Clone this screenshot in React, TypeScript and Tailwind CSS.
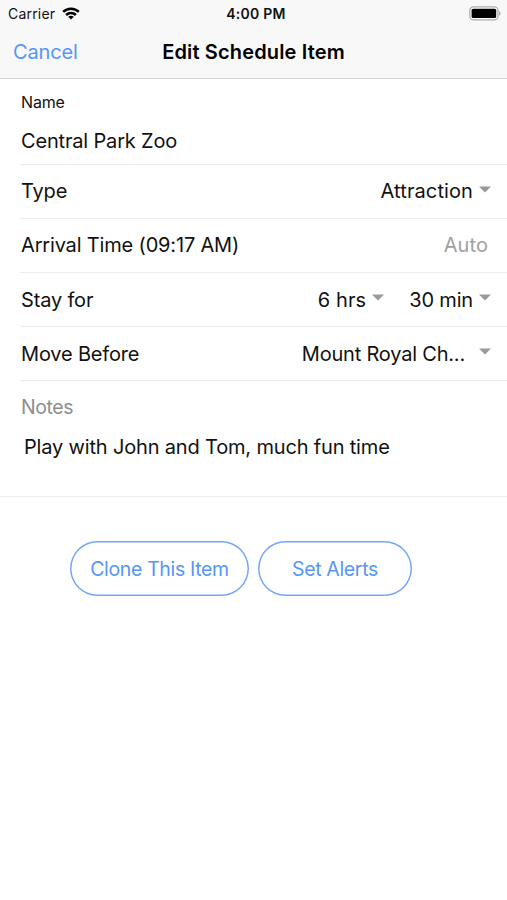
import { useState } from "react";
import type { ReactNode } from "react";

const item = {
    name: "Central Park Zoo",
    type: "Attraction",
    arrival: "09:17 AM",
    hours: "6 hrs",
    minutes: "30 min",
    before: "Mount Royal Ch...",
};

function Caret() {
    return (
        <svg width="12" height="7" viewBox="0 0 12 7" className="mb-1 shrink-0 fill-[#999999]">
            <path d="M0 0.5H12L6 6.5Z" />
        </svg>
    );
}

function WifiIcon() {
    return (
        <svg width="18" height="13" viewBox="0 0 18 13" fill="none" stroke="#000" strokeWidth="2.5">
            <path d="M1.2 4.9C5.5 0.6 12.5 0.6 16.8 4.9" />
            <path d="M4.1 8C6.9 5.2 11.1 5.2 13.9 8" />
            <path d="M9 12.6L6.2 9.8C7.8 8.3 10.2 8.3 11.8 9.8Z" fill="#000" stroke="none" />
        </svg>
    );
}

function BatteryIcon() {
    return (
        <svg width="32" height="15" viewBox="0 0 32 15">
            <rect x="0.8" y="0.9" width="28.2" height="13" rx="3.6" fill="#fff" stroke="#a9a9a9" strokeWidth="1.2" />
            <rect x="2.6" y="2.7" width="24.6" height="9.4" rx="1.6" fill="#000" />
            <path d="M30.2 5.2C31.8 5.7 31.8 9.1 30.2 9.6Z" fill="#999" />
        </svg>
    );
}

function Row({ label, children }: { label: string; children: ReactNode }) {
    return (
        <div className="ml-[20px] flex h-[54.2px] items-center justify-between border-b border-[#ececec] pr-4 pl-px">
            <span>{label}</span>
            <div className="flex items-center">{children}</div>
        </div>
    );
}

export default function EditScheduleItem() {
    const [notes, setNotes] = useState("Play with John and Tom, much fun time");

    return (
        <main className="flex h-[900px] w-[507px] flex-col overflow-hidden bg-white font-['Inter',sans-serif] text-[20px] leading-6 tracking-[-0.17px] text-[#111111]">
            <header className="h-[79px] shrink-0 border-b border-[#d4d4d4] bg-[#f8f8f8]">
                <div className="grid h-[27px] grid-cols-3 items-center pr-[6px] pl-2 text-[14px]">
                    <div className="flex items-center gap-[7px]">
                        <span className="tracking-[0.2px]">Carrier</span>
                        <WifiIcon />
                    </div>
                    <span className="pl-[3px] text-center font-semibold tracking-[0.25px]">4:00 PM</span>
                    <div className="flex justify-end">
                        <BatteryIcon />
                    </div>
                </div>
                <div className="grid h-[50px] grid-cols-[1fr_auto_1fr] items-center px-[13px]">
                    <button className="text-left text-[#5596f7]">Cancel</button>
                    <h1 className="font-semibold tracking-[0.15px] text-black">Edit Schedule Item</h1>
                    <span />
                </div>
            </header>

            <section className="ml-[20px] flex h-[85.7px] shrink-0 flex-col border-b border-[#ececec] pt-[11px] pl-px">
                <span className="text-[16px]">Name</span>
                <span className="mt-[15px]">{item.name}</span>
            </section>

            <Row label="Type">
                <span className="mr-[6px] tracking-[0.1px]">{item.type}</span>
                <Caret />
            </Row>
            <Row label={`Arrival Time (${item.arrival})`}>
                <span className="mr-[3px] tracking-[0.1px] text-[#a0a0a0]">Auto</span>
            </Row>
            <Row label="Stay for">
                <span className="mr-[6px] tracking-[0.1px]">{item.hours}</span>
                <Caret />
                <span className="mr-[6px] ml-[25px]">{item.minutes}</span>
                <Caret />
            </Row>
            <Row label="Move Before">
                <span className="mr-[14px] tracking-[-0.2px]">{item.before}</span>
                <Caret />
            </Row>

            <section className="flex h-[116px] shrink-0 flex-col border-b border-[#ececec] pt-[14px] pl-[21px]">
                <label htmlFor="notes" className="text-[19.5px] tracking-[-0.4px] text-[#8e8e8e]">Notes</label>
                <textarea
                    id="notes"
                    value={notes}
                    onChange={(e) => setNotes(e.target.value)}
                    className="mt-4 ml-[3px] h-12 resize-none overflow-hidden outline-none"
                />
            </section>

            <div className="mt-[44px] ml-[70px] flex gap-[9px] text-[19.5px] tracking-[-0.35px] text-[#5596f7]">
                <button className="h-[55px] w-[179px] rounded-full ring-[1.5px] ring-[#74a7f8] ring-inset">Clone This Item</button>
                <button className="h-[55px] w-[154px] rounded-full ring-[1.5px] ring-[#74a7f8] ring-inset">Set Alerts</button>
            </div>
        </main>
    );
}
